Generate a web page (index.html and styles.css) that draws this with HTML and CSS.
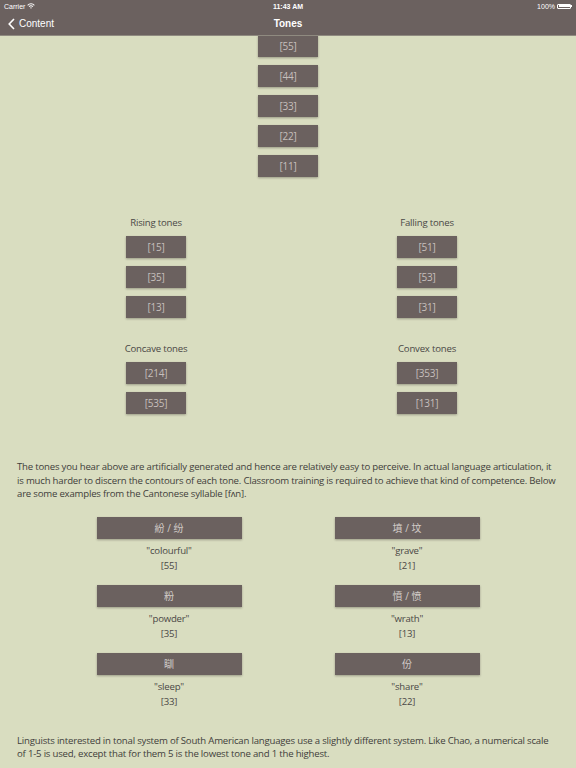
FILE: index.html
```html
<!DOCTYPE html>
<html>
<head>
<meta charset="utf-8">
<link rel="stylesheet" href="styles.css">
</head>
<body>
<header class="header">
  <div class="status">
    <div class="status-left">Carrier
      <svg class="wifi" width="8" height="6" viewBox="0 0 8 6"><path d="M0.3 2 A5 5 0 0 1 7.7 2 L7 2.7 A4 4 0 0 0 1 2.7Z M1.7 3.4 A3 3 0 0 1 6.3 3.4 L5.6 4.1 A2 2 0 0 0 2.4 4.1Z M3.1 4.8 A1.2 1.2 0 0 1 4.9 4.8 L4 5.8Z" fill="#fff"/></svg>
    </div>
    <div class="status-time">11:43 AM</div>
    <div class="status-right">100%
      <span class="battery"><span class="battery-fill"></span></span><span class="battery-tip"></span>
    </div>
  </div>
  <div class="nav">
    <div class="back">
      <svg width="7" height="12" viewBox="0 0 7 12"><path d="M6 1 L1.2 6 L6 11" fill="none" stroke="#fff" stroke-width="1.6"/></svg>
      <span>Content</span>
    </div>
    <div class="title">Tones</div>
  </div>
</header>
<main class="content">
  <div class="level-stack">
    <div class="tone-btn">[55]</div>
    <div class="tone-btn">[44]</div>
    <div class="tone-btn">[33]</div>
    <div class="tone-btn">[22]</div>
    <div class="tone-btn">[11]</div>
  </div>

  <div class="groups">
    <div class="group">
      <div class="group-label">Rising tones</div>
      <div class="tone-btn">[15]</div>
      <div class="tone-btn">[35]</div>
      <div class="tone-btn">[13]</div>
    </div>
    <div class="group">
      <div class="group-label">Falling tones</div>
      <div class="tone-btn">[51]</div>
      <div class="tone-btn">[53]</div>
      <div class="tone-btn">[31]</div>
    </div>
    <div class="group group-second">
      <div class="group-label">Concave tones</div>
      <div class="tone-btn">[214]</div>
      <div class="tone-btn">[535]</div>
    </div>
    <div class="group group-second">
      <div class="group-label">Convex tones</div>
      <div class="tone-btn">[353]</div>
      <div class="tone-btn">[131]</div>
    </div>
  </div>

  <p class="para para-first">The tones you hear above are artificially generated and hence are relatively easy to perceive. In actual language articulation, it is much harder to discern the contours of each tone. Classroom training is required to achieve that kind of competence. Below are some examples from the Cantonese syllable [fʌn].</p>

  <div class="examples">
    <div class="example">
      <div class="word-btn">紛 / 纷</div>
      <div class="gloss">"colourful"</div>
      <div class="gloss">[55]</div>
    </div>
    <div class="example">
      <div class="word-btn">墳 / 坟</div>
      <div class="gloss">"grave"</div>
      <div class="gloss">[21]</div>
    </div>
    <div class="example">
      <div class="word-btn">粉</div>
      <div class="gloss">"powder"</div>
      <div class="gloss">[35]</div>
    </div>
    <div class="example">
      <div class="word-btn">憤 / 愤</div>
      <div class="gloss">"wrath"</div>
      <div class="gloss">[13]</div>
    </div>
    <div class="example">
      <div class="word-btn">瞓</div>
      <div class="gloss">"sleep"</div>
      <div class="gloss">[33]</div>
    </div>
    <div class="example">
      <div class="word-btn">份</div>
      <div class="gloss">"share"</div>
      <div class="gloss">[22]</div>
    </div>
  </div>

  <p class="para para-last">Linguists interested in tonal system of South American languages use a slightly different system. Like Chao, a numerical scale of 1-5 is used, except that for them 5 is the lowest tone and 1 the highest.</p>
</main>
</body>
</html>
```

FILE: styles.css
```css
html, body {
  margin: 0;
  padding: 0;
}
body {
  width: 576px;
  height: 768px;
  overflow: hidden;
  background: #d9ddc0;
  font-family: "Open Sans", "Noto Sans CJK TC", sans-serif;
  color: #4a4846;
}
.header {
  background: #6b615f;
  height: 36px;
  color: #fff;
  font-family: "Liberation Sans", "Noto Sans", sans-serif;
  position: relative;
  z-index: 2;
  border-bottom: 1px solid #8f8a80;
  box-sizing: border-box;
}
.status {
  height: 12px;
  display: flex;
  align-items: center;
  justify-content: space-between;
  padding: 0 4px;
  font-size: 7px;
}
.status-left {
  display: flex;
  align-items: center;
  gap: 2px;
  width: 80px;
}
.status-time {
  font-weight: bold;
}
.status-right {
  width: 80px;
  display: flex;
  justify-content: flex-end;
  align-items: center;
  gap: 2px;
}
.battery {
  width: 14px;
  height: 5px;
  border: 0.5px solid #fff;
  border-radius: 1px;
  padding: 0.5px;
  box-sizing: border-box;
  display: inline-flex;
}
.battery-fill {
  flex: 1;
  background: #fff;
}
.battery-tip {
  width: 1px;
  height: 2px;
  background: #fff;
  margin-left: -2px;
}
.nav {
  height: 23px;
  display: flex;
  align-items: center;
  justify-content: center;
  position: relative;
}
.back {
  position: absolute;
  left: 8px;
  top: 0;
  height: 23px;
  display: flex;
  align-items: center;
  gap: 4px;
  font-size: 10px;
}
.title {
  font-size: 10px;
  font-weight: bold;
}
.content {
  margin-top: -1px;
}
.tone-btn {
  width: 60px;
  height: 22px;
  background: #6b615f;
  color: #c6bfbc;
  font-size: 10px;
  letter-spacing: -0.2px;
  display: flex;
  align-items: center;
  justify-content: center;
  box-shadow: 0 1px 2px rgba(40, 35, 30, 0.35);
}
.level-stack {
  display: flex;
  flex-direction: column;
  align-items: center;
  gap: 8px;
}
.groups {
  display: grid;
  grid-template-columns: 200px 200px;
  column-gap: 71px;
  row-gap: 25px;
  padding-left: 56px;
  margin-top: 39px;
}
.group {
  display: flex;
  flex-direction: column;
  align-items: center;
  gap: 8px;
}
.group-label {
  font-size: 9.6px;
  letter-spacing: -0.2px;
  line-height: 14px;
  margin-bottom: -2px;
  margin-top: 0;
}
.group + .group + .group {
  margin-top: -1px;
}
.para {
  margin: 0;
  padding: 0 20px 0 17px;
  font-size: 9.6px;
  line-height: 13.5px;
  letter-spacing: -0.2px;
  color: #3f3d3b;
}
.para-first {
  margin-top: 46px;
}
.examples {
  display: grid;
  grid-template-columns: 145px 145px;
  column-gap: 93px;
  row-gap: 12px;
  justify-content: center;
  margin-top: 16px;
}
.example {
  display: flex;
  flex-direction: column;
  align-items: center;
}
.word-btn {
  width: 145px;
  height: 22px;
  background: #6b615f;
  color: #d2ccc8;
  font-size: 10px;
  display: flex;
  align-items: center;
  justify-content: center;
  box-shadow: 0 1px 2px rgba(40, 35, 30, 0.35);
  margin-bottom: 4px;
}
.gloss {
  font-size: 9.6px;
  letter-spacing: -0.2px;
  line-height: 15px;
}
.para-last {
  margin-top: 25px;
}
```
